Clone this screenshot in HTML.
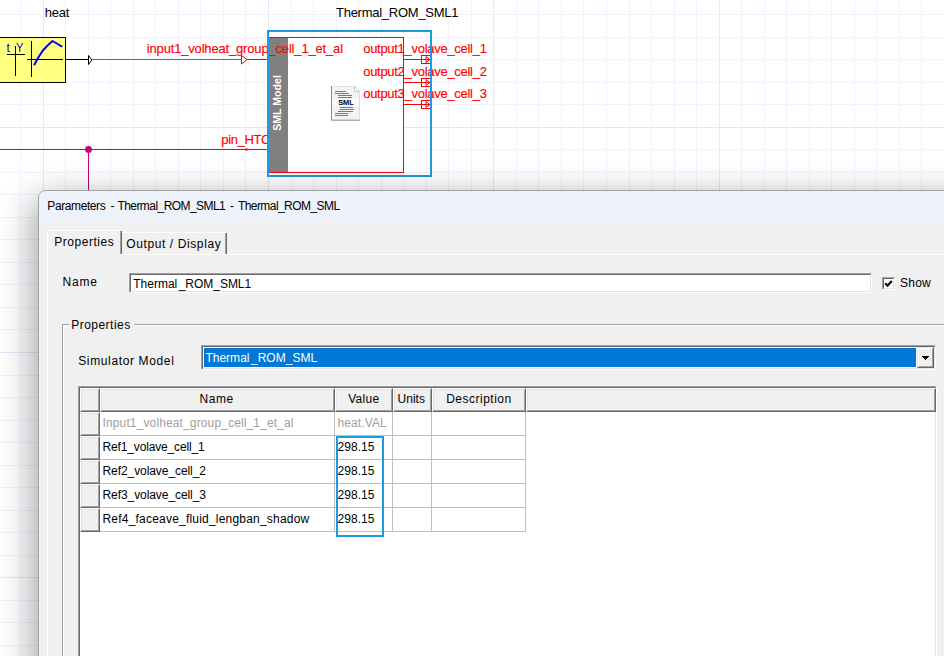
<!DOCTYPE html><html><head><meta charset="utf-8"><title>Parameters</title>
<style>
html,body{margin:0;padding:0;}
body{width:944px;height:656px;overflow:hidden;background:#fff;position:relative;font-family:"Liberation Sans",sans-serif;font-size:12px;color:#000;}
.abs{position:absolute;}
.t{position:absolute;white-space:pre;line-height:14px;height:14px;}
#dlg{position:absolute;left:38px;top:190px;width:960px;height:520px;background:#f0f0f0;border:1px solid #a3a3a3;border-radius:8px;box-shadow:0 12px 36px 3px rgba(0,0,0,0.4);overflow:hidden;box-sizing:border-box;}
#tb{position:absolute;left:0;top:0;width:100%;height:30px;background:#eef2fa;}
.cell{position:absolute;background:#fff;}
</style></head><body>
<svg class="abs" style="left:0;top:0" width="944" height="656" viewBox="0 0 944 656" shape-rendering="crispEdges">
<rect x="20" y="0" width="1" height="656" fill="#f2f2ff"/>
<rect x="43" y="0" width="1" height="656" fill="#e7e7fb"/>
<rect x="65" y="0" width="1" height="656" fill="#f2f2ff"/>
<rect x="88" y="0" width="1" height="656" fill="#f2f2ff"/>
<rect x="110" y="0" width="1" height="656" fill="#f2f2ff"/>
<rect x="133" y="0" width="1" height="656" fill="#f2f2ff"/>
<rect x="155" y="0" width="1" height="656" fill="#f2f2ff"/>
<rect x="178" y="0" width="1" height="656" fill="#f2f2ff"/>
<rect x="200" y="0" width="1" height="656" fill="#f2f2ff"/>
<rect x="223" y="0" width="1" height="656" fill="#f2f2ff"/>
<rect x="245" y="0" width="1" height="656" fill="#f2f2ff"/>
<rect x="268" y="0" width="1" height="656" fill="#e7e7fb"/>
<rect x="291" y="0" width="1" height="656" fill="#f2f2ff"/>
<rect x="313" y="0" width="1" height="656" fill="#f2f2ff"/>
<rect x="336" y="0" width="1" height="656" fill="#f2f2ff"/>
<rect x="358" y="0" width="1" height="656" fill="#f2f2ff"/>
<rect x="381" y="0" width="1" height="656" fill="#f2f2ff"/>
<rect x="403" y="0" width="1" height="656" fill="#f2f2ff"/>
<rect x="426" y="0" width="1" height="656" fill="#f2f2ff"/>
<rect x="448" y="0" width="1" height="656" fill="#f2f2ff"/>
<rect x="471" y="0" width="1" height="656" fill="#f2f2ff"/>
<rect x="493" y="0" width="1" height="656" fill="#e7e7fb"/>
<rect x="516" y="0" width="1" height="656" fill="#f2f2ff"/>
<rect x="538" y="0" width="1" height="656" fill="#f2f2ff"/>
<rect x="561" y="0" width="1" height="656" fill="#f2f2ff"/>
<rect x="583" y="0" width="1" height="656" fill="#f2f2ff"/>
<rect x="606" y="0" width="1" height="656" fill="#f2f2ff"/>
<rect x="629" y="0" width="1" height="656" fill="#f2f2ff"/>
<rect x="651" y="0" width="1" height="656" fill="#f2f2ff"/>
<rect x="674" y="0" width="1" height="656" fill="#f2f2ff"/>
<rect x="696" y="0" width="1" height="656" fill="#f2f2ff"/>
<rect x="719" y="0" width="1" height="656" fill="#e7e7fb"/>
<rect x="741" y="0" width="1" height="656" fill="#f2f2ff"/>
<rect x="764" y="0" width="1" height="656" fill="#f2f2ff"/>
<rect x="786" y="0" width="1" height="656" fill="#f2f2ff"/>
<rect x="809" y="0" width="1" height="656" fill="#f2f2ff"/>
<rect x="831" y="0" width="1" height="656" fill="#f2f2ff"/>
<rect x="854" y="0" width="1" height="656" fill="#f2f2ff"/>
<rect x="876" y="0" width="1" height="656" fill="#f2f2ff"/>
<rect x="899" y="0" width="1" height="656" fill="#f2f2ff"/>
<rect x="921" y="0" width="1" height="656" fill="#f2f2ff"/>
<rect x="0" y="14" width="944" height="1" fill="#f2f2ff"/>
<rect x="0" y="37" width="944" height="1" fill="#f2f2ff"/>
<rect x="0" y="59" width="944" height="1" fill="#f2f2ff"/>
<rect x="0" y="82" width="944" height="1" fill="#f2f2ff"/>
<rect x="0" y="104" width="944" height="1" fill="#f2f2ff"/>
<rect x="0" y="127" width="944" height="1" fill="#e7e7fb"/>
<rect x="0" y="149" width="944" height="1" fill="#f2f2ff"/>
<rect x="0" y="172" width="944" height="1" fill="#f2f2ff"/>
<rect x="0" y="194" width="944" height="1" fill="#f2f2ff"/>
<rect x="0" y="217" width="944" height="1" fill="#f2f2ff"/>
<rect x="0" y="239" width="944" height="1" fill="#f2f2ff"/>
<rect x="0" y="262" width="944" height="1" fill="#f2f2ff"/>
<rect x="0" y="284" width="944" height="1" fill="#f2f2ff"/>
<rect x="0" y="307" width="944" height="1" fill="#f2f2ff"/>
<rect x="0" y="329" width="944" height="1" fill="#f2f2ff"/>
<rect x="0" y="352" width="944" height="1" fill="#e7e7fb"/>
<rect x="0" y="375" width="944" height="1" fill="#f2f2ff"/>
<rect x="0" y="397" width="944" height="1" fill="#f2f2ff"/>
<rect x="0" y="420" width="944" height="1" fill="#f2f2ff"/>
<rect x="0" y="442" width="944" height="1" fill="#f2f2ff"/>
<rect x="0" y="465" width="944" height="1" fill="#f2f2ff"/>
<rect x="0" y="487" width="944" height="1" fill="#f2f2ff"/>
<rect x="0" y="510" width="944" height="1" fill="#f2f2ff"/>
<rect x="0" y="532" width="944" height="1" fill="#f2f2ff"/>
<rect x="0" y="555" width="944" height="1" fill="#f2f2ff"/>
<rect x="0" y="577" width="944" height="1" fill="#e7e7fb"/>
<rect x="0" y="600" width="944" height="1" fill="#f2f2ff"/>
<rect x="0" y="622" width="944" height="1" fill="#f2f2ff"/>
<rect x="0" y="645" width="944" height="1" fill="#f2f2ff"/>
<rect x="43" y="0" width="1" height="656" fill="#e7e7fb"/>
<rect x="268" y="0" width="1" height="656" fill="#e7e7fb"/>
<rect x="493" y="0" width="1" height="656" fill="#e7e7fb"/>
<rect x="719" y="0" width="1" height="656" fill="#e7e7fb"/>
<rect x="-0.5" y="37.5" width="66" height="45" fill="#ffff80" stroke="#000" stroke-width="1"/>
<rect x="7" y="54" width="18" height="1" fill="#000"/>
<rect x="15" y="46" width="1" height="30" fill="#000"/>
<rect x="31" y="41" width="1" height="36" fill="#000"/>
<rect x="27" y="59" width="36" height="1" fill="#000"/>
<rect x="66" y="59" width="23" height="1" fill="#000"/>
<rect x="92" y="59" width="150" height="1" fill="#2e8b57"/>
<rect x="246" y="59" width="22" height="1" fill="#ff0000"/>
<rect x="0" y="149" width="246" height="1" fill="#c8007d"/>
<rect x="246" y="149" width="22" height="1" fill="#ff0000"/>
<rect x="88" y="149" width="1" height="42" fill="#c8007d"/>
<rect x="268.5" y="37.5" width="135" height="135" fill="#fff" stroke="#ff0000" stroke-width="1"/>
<rect x="269" y="38" width="19" height="134" fill="#808080"/>
<rect x="404" y="59" width="26" height="1" fill="#ff0000"/>
<rect x="421.5" y="55.5" width="9" height="8" fill="none" stroke="#ff0000" stroke-width="1"/>
<rect x="404" y="82" width="26" height="1" fill="#ff0000"/>
<rect x="421.5" y="78.5" width="9" height="8" fill="none" stroke="#ff0000" stroke-width="1"/>
<rect x="404" y="104" width="26" height="1" fill="#ff0000"/>
<rect x="421.5" y="100.5" width="9" height="8" fill="none" stroke="#ff0000" stroke-width="1"/>
</svg>
<svg class="abs" style="left:0;top:0" width="944" height="656" viewBox="0 0 944 656">
<polyline points="34.5,64.5 38,58 42.5,51 47,46 52.5,41 56,43 61.5,46.3" fill="none" stroke="#0000ff" stroke-width="2" stroke-linejoin="round" stroke-linecap="round"/>
<path d="M88.5 55.5 L88.5 64.5 L91.8 60 Z" fill="#fff" stroke="#000" stroke-width="1"/>
<path d="M241.5 55.5 L241.5 64 L247 59.7 Z" fill="#fff" stroke="#ff0000" stroke-width="1"/>
<circle cx="88.5" cy="149.5" r="3.4" fill="#c8007d"/>
<circle cx="246.5" cy="149.5" r="1.2" fill="#ff0000"/>
<path d="M426 56.5 L426 62.5 L430 59.5 Z" fill="none" stroke="#ff0000" stroke-width="1"/>
<path d="M426 79.5 L426 85.5 L430 82.5 Z" fill="none" stroke="#ff0000" stroke-width="1"/>
<path d="M426 101.5 L426 107.5 L430 104.5 Z" fill="none" stroke="#ff0000" stroke-width="1"/>
<text x="277.3" y="103" transform="rotate(-90 277.3 103)" text-anchor="middle" dominant-baseline="central" font-family="Liberation Sans, sans-serif" font-weight="bold" font-size="10.6" fill="#fff">SML Model</text>
<g>
<path d="M331.5 86.5 L354.5 86.5 L359.5 91.5 L359.5 120 L331.5 120 Z" fill="#f3f3f3" stroke="none"/>
<path d="M331.5 86 L331.5 120.2 L360 120.2" fill="none" stroke="#8c8c8c" stroke-width="1"/>
<path d="M359.5 91.5 L359.5 120" fill="none" stroke="#dcdcdc" stroke-width="1"/>
<path d="M332 86.5 L354.5 86.5" fill="none" stroke="#e2e2e2" stroke-width="1"/>
<path d="M354.5 86.5 L354.5 91.5 L359.5 91.5 Z" fill="#fff" stroke="#c8c8c8" stroke-width="1"/>
<rect x="333" y="98.8" width="26" height="7.2" fill="#fafafa"/>
<rect x="335" y="91" width="11" height="1" fill="#7a7a7a"/>
<rect x="335" y="93" width="14" height="1" fill="#7a7a7a"/>
<rect x="338" y="95" width="14" height="1" fill="#7a7a7a"/>
<rect x="338" y="97" width="14" height="1" fill="#7a7a7a"/>
<rect x="340" y="107" width="13" height="1" fill="#7a7a7a"/>
<rect x="340" y="109" width="14" height="1" fill="#7a7a7a"/>
<rect x="338" y="111" width="15" height="1" fill="#7a7a7a"/>
<rect x="335" y="113" width="13" height="1" fill="#7a7a7a"/>
<rect x="335" y="115" width="13" height="1" fill="#7a7a7a"/>
<text x="346" y="105" text-anchor="middle" font-family="Liberation Sans, sans-serif" font-weight="bold" font-size="7.4" fill="#000018">SML</text>
</g>
</svg>
<span class="t" style="left:44.8px;top:5.70px;font-size:13px;color:#000;letter-spacing:-0.24px;">heat</span>
<span class="t" style="left:336px;top:5.70px;font-size:13px;color:#000;letter-spacing:-0.26px;">Thermal_ROM_SML1</span>
<span class="t" style="left:146.8px;top:41.70px;font-size:13px;color:#ff0000;letter-spacing:-0.17px;-webkit-text-stroke:0.15px #ff0000;">input1_volheat_group_cell_1_et_al</span>
<span class="t" style="left:363.2px;top:41.70px;font-size:13px;color:#ff0000;letter-spacing:-0.285px;-webkit-text-stroke:0.15px #ff0000;">output1_volave_cell_1</span>
<span class="t" style="left:363.2px;top:64.70px;font-size:13px;color:#ff0000;letter-spacing:-0.285px;-webkit-text-stroke:0.15px #ff0000;">output2_volave_cell_2</span>
<span class="t" style="left:363.2px;top:86.70px;font-size:13px;color:#ff0000;letter-spacing:-0.285px;-webkit-text-stroke:0.15px #ff0000;">output3_volave_cell_3</span>
<div class="abs" style="left:200px;top:125px;width:67px;height:30px;overflow:hidden">
<span class="t" style="left:21.3px;top:7.70px;font-size:13px;color:#ff0000;letter-spacing:-0.35px;-webkit-text-stroke:0.15px #ff0000;">pin_HTC</span>
</div>
<span class="t" style="left:6.6px;top:41.33px;font-size:12.3px;color:#1000dc;letter-spacing:0px;">t</span>
<span class="t" style="left:15.9px;top:41.33px;font-size:12.3px;color:#1000dc;letter-spacing:0px;transform:scaleX(0.9);transform-origin:0 0;">Y</span>
<svg class="abs" style="left:0;top:0" width="944" height="200" viewBox="0 0 944 200" shape-rendering="crispEdges">
<rect x="268" y="31" width="163" height="145" fill="none" stroke="#1e9ae0" stroke-width="2"/>
</svg>
<div id="dlg"><div id="tb"></div></div>
<span class="t" style="left:47.3px;top:198.63px;font-size:12px;color:#000;letter-spacing:-0.403px;">Parameters</span>
<span class="t" style="left:110.4px;top:198.63px;font-size:12px;color:#000;letter-spacing:0.000px;">-</span>
<span class="t" style="left:117.4px;top:198.63px;font-size:12px;color:#000;letter-spacing:-0.554px;">Thermal_ROM_SML1</span>
<span class="t" style="left:229.9px;top:198.63px;font-size:12px;color:#000;letter-spacing:0.000px;">-</span>
<span class="t" style="left:237.9px;top:198.63px;font-size:12px;color:#000;letter-spacing:-0.559px;">Thermal_ROM_SML</span>
<div class="abs" style="left:47px;top:254px;width:900px;height:1px;background:#fff;"></div>
<div class="abs" style="left:47px;top:254px;width:1px;height:420px;background:#fff;"></div>
<div class="abs" style="left:122px;top:232px;width:104px;height:1px;background:#fff;"></div>
<div class="abs" style="left:226px;top:233px;width:1px;height:21px;background:#696969;"></div>
<div class="abs" style="left:225px;top:233px;width:1px;height:21px;background:#a0a0a0;"></div>
<span class="t" style="left:126.3px;top:237.03px;font-size:12px;color:#000;letter-spacing:0.6px;">Output / Display</span>
<div class="abs" style="left:47px;top:230px;width:74px;height:25px;background:#f0f0f0;"></div>
<div class="abs" style="left:47px;top:230px;width:73px;height:1px;background:#fff;"></div>
<div class="abs" style="left:47px;top:230px;width:1px;height:25px;background:#fff;"></div>
<div class="abs" style="left:120px;top:231px;width:1px;height:23px;background:#a0a0a0;"></div>
<div class="abs" style="left:121px;top:231px;width:1px;height:23px;background:#696969;"></div>
<span class="t" style="left:54.3px;top:234.83px;font-size:12px;color:#000;letter-spacing:0.53px;">Properties</span>
<span class="t" style="left:62.4px;top:275.03px;font-size:12px;color:#000;letter-spacing:0.85px;">Name</span>
<div class="abs" style="left:129px;top:273px;width:743px;height:20px;background:#fff;box-sizing:border-box;border:1px solid;border-color:#a0a0a0 #fff #fff #a0a0a0;"></div>
<div class="abs" style="left:130px;top:274px;width:741px;height:18px;background:#fff;box-sizing:border-box;border:1px solid;border-color:#696969 #e3e3e3 #e3e3e3 #696969;"></div>
<span class="t" style="left:133.2px;top:276.63px;font-size:12px;color:#000;letter-spacing:0.014px;">Thermal</span>
<span class="t" style="left:178.7px;top:276.63px;font-size:12px;color:#000;letter-spacing:-0.025px;">_ROM_SML1</span>
<div class="abs" style="left:882px;top:277px;width:13px;height:13px;background:#fff;box-sizing:border-box;border:1px solid;border-color:#a0a0a0 #fff #fff #a0a0a0;"></div>
<div class="abs" style="left:883px;top:278px;width:11px;height:11px;background:#fff;box-sizing:border-box;border:1px solid;border-color:#696969 #e3e3e3 #e3e3e3 #696969;"></div>
<svg class="abs" style="left:882px;top:277px" width="13" height="13" viewBox="0 0 13 13"><path d="M3.2 6.2 L5.5 8.6 L9.8 4.0" fill="none" stroke="#000" stroke-width="2.1"/></svg>
<span class="t" style="left:900px;top:276.33px;font-size:12px;color:#000;letter-spacing:0.24px;">Show</span>
<div class="abs" style="left:62px;top:324px;width:900px;height:1px;background:#a0a0a0;"></div>
<div class="abs" style="left:63px;top:325px;width:900px;height:1px;background:#fff;"></div>
<div class="abs" style="left:62px;top:324px;width:1px;height:400px;background:#a0a0a0;"></div>
<div class="abs" style="left:63px;top:325px;width:1px;height:400px;background:#fff;"></div>
<div class="abs" style="left:69px;top:316px;width:65px;height:16px;background:#f0f0f0;"></div>
<span class="t" style="left:71.2px;top:318.03px;font-size:12px;color:#000;letter-spacing:0.48px;">Properties</span>
<span class="t" style="left:78.2px;top:353.63px;font-size:12px;color:#000;letter-spacing:0.64px;">Simulator Model</span>
<div class="abs" style="left:201px;top:345px;width:735px;height:25px;background:#fff;box-sizing:border-box;border:1px solid;border-color:#a0a0a0 #fff #fff #a0a0a0;"></div>
<div class="abs" style="left:202px;top:346px;width:733px;height:23px;background:#fff;box-sizing:border-box;border:1px solid;border-color:#696969 #e3e3e3 #e3e3e3 #696969;"></div>
<div class="abs" style="left:204px;top:348px;width:712px;height:19px;background:#0078d7;"></div>
<span class="t" style="left:205.4px;top:351.03px;font-size:12px;color:#fff;letter-spacing:0.014px;">Thermal</span>
<span class="t" style="left:251.0px;top:351.03px;font-size:12px;color:#fff;letter-spacing:0.010px;">_ROM_SML</span>
<div class="abs" style="left:917px;top:347px;width:17px;height:21px;background:#f0f0f0;box-sizing:border-box;border:1px solid;border-color:#e3e3e3 #696969 #696969 #e3e3e3;"></div>
<div class="abs" style="left:918px;top:348px;width:15px;height:19px;background:#f0f0f0;box-sizing:border-box;border:1px solid;border-color:#fff #a0a0a0 #a0a0a0 #fff;"></div>
<svg class="abs" style="left:917px;top:347px" width="17" height="21" viewBox="917 347 17 21" shape-rendering="crispEdges"><rect x="922" y="356" width="7" height="1"/><rect x="923" y="357" width="5" height="1"/><rect x="924" y="358" width="3" height="1"/><rect x="925" y="359" width="1" height="1"/></svg>
<div class="abs" style="left:78px;top:386px;width:859px;height:300px;background:#fff;box-sizing:border-box;border:1px solid;border-color:#a0a0a0 #fff #fff #a0a0a0;"></div>
<div class="abs" style="left:79px;top:387px;width:857px;height:300px;background:#fff;box-sizing:border-box;border:1px solid;border-color:#696969 #e3e3e3 #e3e3e3 #696969;"></div>
<div class="abs" style="left:80px;top:388px;width:20px;height:24px;background:#f0f0f0;box-sizing:border-box;border:1px solid;border-color:#fff #696969 #696969 #fff;"></div>
<div class="abs" style="left:81px;top:389px;width:18px;height:22px;background:#f0f0f0;box-sizing:border-box;border:1px solid;border-color:#e3e3e3 #a0a0a0 #a0a0a0 #e3e3e3;"></div>
<div class="abs" style="left:100px;top:388px;width:235px;height:24px;background:#f0f0f0;box-sizing:border-box;border:1px solid;border-color:#fff #696969 #696969 #fff;"></div>
<div class="abs" style="left:101px;top:389px;width:233px;height:22px;background:#f0f0f0;box-sizing:border-box;border:1px solid;border-color:#e3e3e3 #a0a0a0 #a0a0a0 #e3e3e3;"></div>
<div class="abs" style="left:335px;top:388px;width:58px;height:24px;background:#f0f0f0;box-sizing:border-box;border:1px solid;border-color:#fff #696969 #696969 #fff;"></div>
<div class="abs" style="left:336px;top:389px;width:56px;height:22px;background:#f0f0f0;box-sizing:border-box;border:1px solid;border-color:#e3e3e3 #a0a0a0 #a0a0a0 #e3e3e3;"></div>
<div class="abs" style="left:393px;top:388px;width:39px;height:24px;background:#f0f0f0;box-sizing:border-box;border:1px solid;border-color:#fff #696969 #696969 #fff;"></div>
<div class="abs" style="left:394px;top:389px;width:37px;height:22px;background:#f0f0f0;box-sizing:border-box;border:1px solid;border-color:#e3e3e3 #a0a0a0 #a0a0a0 #e3e3e3;"></div>
<div class="abs" style="left:432px;top:388px;width:94px;height:24px;background:#f0f0f0;box-sizing:border-box;border:1px solid;border-color:#fff #696969 #696969 #fff;"></div>
<div class="abs" style="left:433px;top:389px;width:92px;height:22px;background:#f0f0f0;box-sizing:border-box;border:1px solid;border-color:#e3e3e3 #a0a0a0 #a0a0a0 #e3e3e3;"></div>
<div class="abs" style="left:526px;top:388px;width:410px;height:24px;background:#f0f0f0;box-sizing:border-box;border:1px solid;border-color:#fff #696969 #696969 #fff;"></div>
<div class="abs" style="left:527px;top:389px;width:408px;height:22px;background:#f0f0f0;box-sizing:border-box;border:1px solid;border-color:#e3e3e3 #a0a0a0 #a0a0a0 #e3e3e3;"></div>
<div class="abs" style="left:80px;top:412px;width:20px;height:24px;background:#f0f0f0;box-sizing:border-box;border:1px solid;border-color:#fff #696969 #696969 #fff;"></div>
<div class="abs" style="left:81px;top:413px;width:18px;height:22px;background:#f0f0f0;box-sizing:border-box;border:1px solid;border-color:#e3e3e3 #a0a0a0 #a0a0a0 #e3e3e3;"></div>
<div class="abs" style="left:80px;top:436px;width:20px;height:24px;background:#f0f0f0;box-sizing:border-box;border:1px solid;border-color:#fff #696969 #696969 #fff;"></div>
<div class="abs" style="left:81px;top:437px;width:18px;height:22px;background:#f0f0f0;box-sizing:border-box;border:1px solid;border-color:#e3e3e3 #a0a0a0 #a0a0a0 #e3e3e3;"></div>
<div class="abs" style="left:80px;top:460px;width:20px;height:24px;background:#f0f0f0;box-sizing:border-box;border:1px solid;border-color:#fff #696969 #696969 #fff;"></div>
<div class="abs" style="left:81px;top:461px;width:18px;height:22px;background:#f0f0f0;box-sizing:border-box;border:1px solid;border-color:#e3e3e3 #a0a0a0 #a0a0a0 #e3e3e3;"></div>
<div class="abs" style="left:80px;top:484px;width:20px;height:24px;background:#f0f0f0;box-sizing:border-box;border:1px solid;border-color:#fff #696969 #696969 #fff;"></div>
<div class="abs" style="left:81px;top:485px;width:18px;height:22px;background:#f0f0f0;box-sizing:border-box;border:1px solid;border-color:#e3e3e3 #a0a0a0 #a0a0a0 #e3e3e3;"></div>
<div class="abs" style="left:80px;top:508px;width:20px;height:24px;background:#f0f0f0;box-sizing:border-box;border:1px solid;border-color:#fff #696969 #696969 #fff;"></div>
<div class="abs" style="left:81px;top:509px;width:18px;height:22px;background:#f0f0f0;box-sizing:border-box;border:1px solid;border-color:#e3e3e3 #a0a0a0 #a0a0a0 #e3e3e3;"></div>
<div class="abs" style="left:100px;top:435px;width:426px;height:1px;background:#c0c0c0;"></div>
<div class="abs" style="left:100px;top:459px;width:426px;height:1px;background:#c0c0c0;"></div>
<div class="abs" style="left:100px;top:483px;width:426px;height:1px;background:#c0c0c0;"></div>
<div class="abs" style="left:100px;top:507px;width:426px;height:1px;background:#c0c0c0;"></div>
<div class="abs" style="left:100px;top:531px;width:426px;height:1px;background:#c0c0c0;"></div>
<div class="abs" style="left:334px;top:412px;width:1px;height:120px;background:#c0c0c0;"></div>
<div class="abs" style="left:392px;top:412px;width:1px;height:120px;background:#c0c0c0;"></div>
<div class="abs" style="left:431px;top:412px;width:1px;height:120px;background:#c0c0c0;"></div>
<div class="abs" style="left:525px;top:412px;width:1px;height:120px;background:#c0c0c0;"></div>
<span class="t" style="left:199.5px;top:392.03px;font-size:12px;color:#000;letter-spacing:0.56px;">Name</span>
<span class="t" style="left:348.2px;top:392.03px;font-size:12px;color:#000;letter-spacing:0.29px;">Value</span>
<span class="t" style="left:397.5px;top:392.03px;font-size:12px;color:#000;letter-spacing:0.03px;">Units</span>
<span class="t" style="left:446.2px;top:392.03px;font-size:12px;color:#000;letter-spacing:0.5px;">Description</span>
<span class="t" style="left:102.5px;top:415.83px;font-size:12px;color:#a0a0a0;letter-spacing:0.13px;">Input1_volheat_group_cell_1_et_al</span>
<span class="t" style="left:337.5px;top:415.83px;font-size:12px;color:#a0a0a0;letter-spacing:0.1px;">heat.VAL</span>
<span class="t" style="left:102.5px;top:439.83px;font-size:12px;color:#000;letter-spacing:-0.147px;">Ref1_volave_cell_1</span>
<span class="t" style="left:337.5px;top:439.83px;font-size:12px;color:#000;letter-spacing:0.05px;">298.15</span>
<span class="t" style="left:102.5px;top:463.83px;font-size:12px;color:#000;letter-spacing:-0.074px;">Ref2_volave_cell_2</span>
<span class="t" style="left:337.5px;top:463.83px;font-size:12px;color:#000;letter-spacing:0.05px;">298.15</span>
<span class="t" style="left:102.5px;top:487.83px;font-size:12px;color:#000;letter-spacing:-0.074px;">Ref3_volave_cell_3</span>
<span class="t" style="left:337.5px;top:487.83px;font-size:12px;color:#000;letter-spacing:0.05px;">298.15</span>
<span class="t" style="left:102.5px;top:511.83px;font-size:12px;color:#000;letter-spacing:0.206px;">Ref4_faceave_fluid_lengban_shadow</span>
<span class="t" style="left:337.5px;top:511.83px;font-size:12px;color:#000;letter-spacing:0.05px;">298.15</span>
<svg class="abs" style="left:330px;top:430px" width="60" height="112" viewBox="330 430 60 112" shape-rendering="crispEdges"><rect x="337" y="437" width="46" height="99" fill="none" stroke="#1e9ae0" stroke-width="2"/></svg>
</body></html>
